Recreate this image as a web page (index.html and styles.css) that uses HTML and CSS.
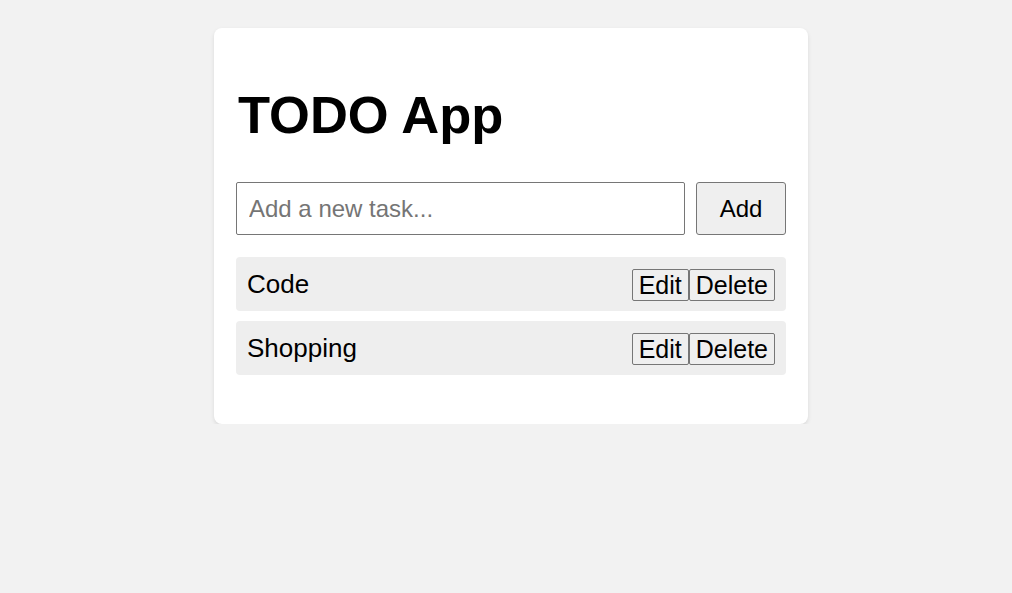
FILE: index.html
```html
<!DOCTYPE html>
<html>
<head>
<meta charset="utf-8">
<title>TODO App</title>
<link rel="stylesheet" href="styles.css">
</head>
<body>
<div class="card">
  <h1 class="title">TODO App</h1>
  <div class="add-row">
    <input class="task-input" type="text" placeholder="Add a new task...">
    <button class="add-btn">Add</button>
  </div>
  <ul class="list">
    <li class="item">
      <span class="item-text">Code</span>
      <span class="actions"><button class="small-btn">Edit</button><button class="small-btn">Delete</button></span>
    </li>
    <li class="item">
      <span class="item-text">Shopping</span>
      <span class="actions"><button class="small-btn">Edit</button><button class="small-btn">Delete</button></span>
    </li>
  </ul>
</div>
</body>
</html>
```
FILE: styles.css
```css
html, body {
  margin: 0;
  padding: 0;
  background: #f2f2f2;
  font-family: "Liberation Sans", Arial, sans-serif;
  color: #000;
}
body {
  padding-top: 28px;
}
.card {
  box-sizing: border-box;
  width: 594px;
  margin-left: 214px;
  background: #fff;
  border-radius: 8px;
  padding: 22px;
  box-shadow: 0 2px 4px rgba(0, 0, 0, 0.1);
}
.title {
  font-size: 52.5px;
  font-weight: bold;
  margin: 35px 0 37px 2px;
  line-height: 60px;
}
.add-row {
  display: flex;
  gap: 11px;
  margin-bottom: 22px;
}
.task-input {
  flex: 1;
  box-sizing: border-box;
  height: 53px;
  border: 1px solid #767676;
  border-radius: 2px;
  padding: 0 12px;
  font-family: "Liberation Sans", Arial, sans-serif;
  font-size: 24px;
  color: #000;
  outline: none;
}
.task-input::placeholder {
  color: #757575;
}
.add-btn {
  box-sizing: border-box;
  width: 90px;
  height: 53px;
  border: 1px solid #767676;
  border-radius: 3px;
  background: #efefef;
  font-family: "Liberation Sans", Arial, sans-serif;
  font-size: 24px;
  color: #000;
  padding: 0;
}
.list {
  list-style: none;
  margin: 0 0 27px 0;
  padding: 0;
  display: flex;
  flex-direction: column;
  gap: 10px;
}
.item {
  display: flex;
  align-items: center;
  justify-content: space-between;
  height: 54px;
  box-sizing: border-box;
  padding: 0 11px;
  background: #eeeeee;
  border-radius: 4px;
}
.item-text {
  font-size: 26px;
}
.actions {
  display: flex;
  padding-top: 2px;
}
.small-btn {
  box-sizing: border-box;
  height: 32px;
  padding: 0 6px;
  border: 1px solid #767676;
  border-radius: 2px;
  background: #efefef;
  font-family: "Liberation Sans", Arial, sans-serif;
  font-size: 25px;
  color: #000;
  margin: 0;
}
```
